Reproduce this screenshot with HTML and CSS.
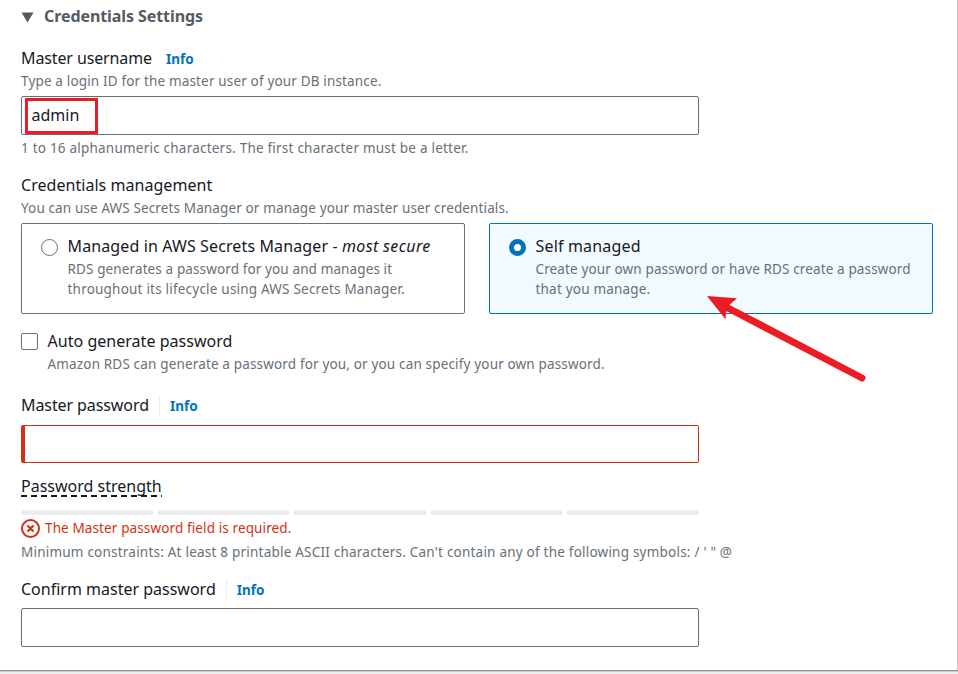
FILE: index.html
```html
<!DOCTYPE html>
<html lang="en">
<head>
<meta charset="utf-8">
<title>Credentials Settings</title>
<link rel="stylesheet" href="styles.css">
</head>
<body>
<main class="panel">
  <h2 class="section-title">
    <svg class="caret" width="13" height="11" viewBox="0 0 13 11"><path d="M.5.5h12L6.500 10.600z" fill="#545b64"/></svg>
    <span class="t-title">Credentials Settings</span>
  </h2>

  <section class="field username">
    <div class="label-row"><span class="label t-user">Master username</span><a class="info">Info</a></div>
    <p class="help t-user-help">Type a login ID for the master user of your DB instance.</p>
    <div class="input"><span class="value">admin</span><span class="highlight"></span></div>
    <p class="help hint t-user-hint">1 to 16 alphanumeric characters. The first character must be a letter.</p>
  </section>

  <section class="field management">
    <div class="label-row"><span class="label t-mgmt">Credentials management</span></div>
    <p class="help t-mgmt-help">You can use AWS Secrets Manager or manage your master user credentials.</p>
    <div class="cards">
      <div class="card">
        <span class="radio"></span>
        <div>
          <div class="label t-managed">Managed in AWS Secrets Manager - <em>most secure</em></div>
          <p class="desc"><span class="t-m1">RDS generates a password for you and manages it</span><br><span class="t-m2">throughout its lifecycle using AWS Secrets Manager.</span></p>
        </div>
      </div>
      <div class="card selected">
        <span class="radio checked"></span>
        <div>
          <div class="label t-self">Self managed</div>
          <p class="desc"><span class="t-s1">Create your own password or have RDS create a password</span><br><span class="t-s2">that you manage.</span></p>
        </div>
        <svg class="arrow" width="164" height="94" viewBox="704 292 164 94"><path d="M727 307.500L862 378" stroke="#ed1c24" stroke-width="7" stroke-linecap="round"/><path d="M707 296l30 2.200-7 6-4 8.500-.5 6.500z" fill="#ed1c24"/></svg>
      </div>
    </div>
  </section>

  <section class="check-row">
    <span class="checkbox"></span>
    <div>
      <div class="label t-auto">Auto generate password</div>
      <p class="desc t-auto-help">Amazon RDS can generate a password for you, or you can specify your own password.</p>
    </div>
  </section>

  <section class="field password">
    <div class="label-row"><span class="label t-pass">Master password</span><a class="info divided">Info</a></div>
    <div class="input invalid"></div>
    <div class="label strength"><span class="t-strength">Password strength</span></div>
    <div class="meter"><i></i><i></i><i></i><i></i><i></i></div>
    <p class="error">
      <svg width="20" height="20" viewBox="0 0 20 20" fill="none" stroke="#d13212" stroke-width="2"><circle cx="9.500" cy="10.500" r="8.500"/><path d="M6.500 7.500l6 6m0-6l-6 6" stroke-width="2.300"/></svg>
      <span class="t-error">The Master password field is required.</span>
    </p>
    <p class="help t-min">Minimum constraints: At least 8 printable ASCII characters. Can't contain any of the following symbols: / ' " @</p>
  </section>

  <section class="field confirm">
    <div class="label-row"><span class="label t-confirm">Confirm master password</span><a class="info divided">Info</a></div>
    <div class="input"></div>
  </section>
</main>
</body>
</html>
```
FILE: styles.css
```css
* { box-sizing: border-box; }
body {
  margin: 0;
  height: 674px;
  overflow: hidden;
  background: #eff2f2;
  color: #16191f;
  font-family: "Noto Sans", sans-serif;
  font-size: 13.5px;
}
p, h2 { margin: 0; }
.panel {
  width: 958px;
  height: 671px;
  padding: 4px 24px 0 21px;
  background: #fff;
  border-right: 1px solid #c4c8c8;
  border-bottom: 1px solid #879596;
  box-shadow: 0 1px 1px #c8cfd0;
}
.section-title {
  display: flex;
  align-items: center;
  gap: 10px;
  height: 24px;
  color: #545b64;
  font-size: 16px;
  font-weight: 700;
  line-height: 24px;
  white-space: nowrap;
}
.caret { margin-top: 3px; }
.field { white-space: nowrap; }
.label-row { display: flex; align-items: center; height: 24px; }
.label { font-size: 16px; line-height: 24px; white-space: nowrap; }
.help { color: #687078; line-height: 22px; }
.desc { color: #687078; line-height: 20px; white-space: nowrap; }
.info {
  display: flex;
  align-items: center;
  height: 20px;
  margin-left: 14px;
  padding-top: 1px;
  color: #0073bb;
  font-weight: 700;
}
.divided { margin-left: 10px; padding-left: 10px; border-left: 1px solid #eaeded; }
.input {
  position: relative;
  display: flex;
  align-items: center;
  width: 678px;
  height: 39px;
  padding: 0 9.5px 1px;
  border: 1px solid #687078;
  border-radius: 2px;
  font-size: 16px;
}
.highlight {
  position: absolute;
  left: 3px;
  top: 1px;
  width: 73px;
  height: 36px;
  border: 3px solid #ed1c24;
}
.username { margin-top: 18px; }
.username .input { margin-top: 4px; }
.hint { margin-top: 2px; }
.management { margin-top: 14px; }
.cards { display: grid; grid-template-columns: 444px 444px; gap: 24px; margin-top: 4px; }
.card {
  position: relative;
  display: flex;
  height: 91px;
  padding: 10px 19px;
  gap: 9.5px;
  border: 1px solid #687078;
  border-radius: 2px;
}
.card .desc { margin-top: 1px; }
.selected { border-color: #0073bb; background: #f1faff; }
.radio { flex: none; width: 17px; height: 17px; margin-top: 5px; border: 1px solid #687078; border-radius: 50%; background: #fff; }
.checked { border: 5px solid #0073bb; }
.arrow { position: absolute; left: 214px; top: 68px; }
.check-row { display: flex; gap: 9.5px; margin-top: 15px; }
.check-row .desc { margin-top: 1px; }
.checkbox { flex: none; width: 17px; height: 17px; margin-top: 4px; border: 1px solid #687078; border-radius: 2px; }
.password { margin-top: 19px; }
.invalid { height: 38px; margin-top: 8px; border-color: #d13212; border-left-width: 4px; }
.strength { height: 24px; margin-top: 11px; }
.strength span {
  display: inline-block;
  height: 23px;
  background: repeating-linear-gradient(90deg, #16191f 0 6px, transparent 6px 10px) 0 100% / 100% 2px no-repeat;
}
.meter { display: grid; grid-template-columns: repeat(5, 1fr); gap: 5px; width: 678px; height: 5px; margin-top: 12px; }
.meter i { background: #eaeded; }
.meter i:first-child { border-radius: 3px 0 0 3px; }
.meter i:last-child { border-radius: 0 3px 3px 0; }
.error { display: flex; align-items: center; gap: 4px; height: 20px; margin-top: 3px; color: #d13212; }
.password .help { margin-top: 3px; }
.confirm { margin-top: 14px; }
.confirm .input { margin-top: 7px; }

/* Tracking */
.t-title { letter-spacing: -.08px; }
.t-user { letter-spacing: -.12px; }
.t-user-help { letter-spacing: .16px; }
.t-user-hint { letter-spacing: .22px; }
.t-mgmt { letter-spacing: .04px; }
.t-mgmt-help { letter-spacing: .13px; }
.t-managed { letter-spacing: .12px; }
.t-managed em { letter-spacing: .35px; }
.t-m1 { letter-spacing: .12px; }
.t-m2 { letter-spacing: .21px; }
.t-self { letter-spacing: .17px; }
.t-s1 { letter-spacing: .13px; }
.t-s2 { letter-spacing: .2px; }
.t-auto { letter-spacing: .03px; }
.t-auto-help { letter-spacing: .16px; }
.t-pass { letter-spacing: -.09px; }
.t-error { letter-spacing: .12px; }
.t-min { letter-spacing: .22px; }
```
